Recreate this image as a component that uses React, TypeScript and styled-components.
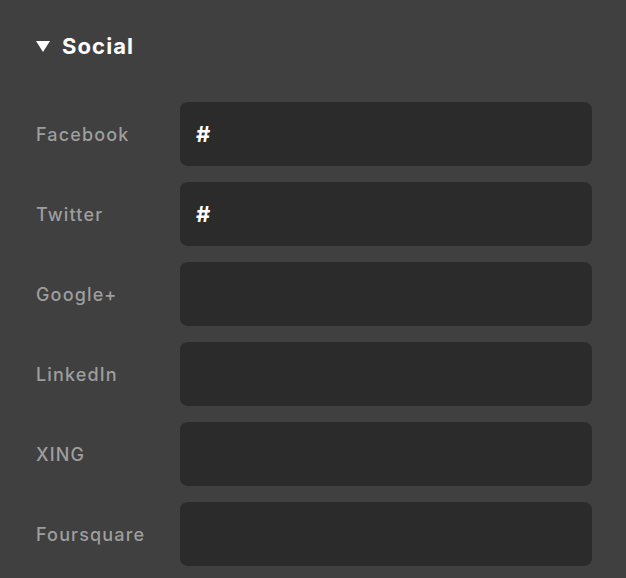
import React from "react";
import styled, { createGlobalStyle } from "styled-components";

const Global = createGlobalStyle`
  html, body { margin: 0; padding: 0; background: #404040; }
  body { font-family: Inter, "Noto Sans", sans-serif; -webkit-font-smoothing: antialiased; }
`;

const Panel = styled.div`
  width: 626px;
  height: 578px;
  box-sizing: border-box;
  background: #404040;
  padding: 30px 34px 0 36px;
  overflow: hidden;
`;

const Header = styled.div`
  display: flex;
  align-items: center;
  gap: 12px;
  height: 32px;
  margin-bottom: 40px;
`;

const Title = styled.span`
  color: #ffffff;
  font-size: 22px;
  font-weight: 700;
  letter-spacing: 1.1px;
`;

const Rows = styled.div`
  display: grid;
  grid-template-columns: 144px 1fr;
  row-gap: 16px;
  align-items: center;
`;

const Label = styled.label`
  color: #9e9e9e;
  font-size: 18px;
  font-weight: 500;
  letter-spacing: 1.15px;
`;

const Field = styled.div`
  height: 64px;
  border-radius: 8px;
  background: #2b2b2b;
  display: flex;
  align-items: center;
  padding-left: 16px;
  color: #ffffff;
  font-size: 22px;
  font-weight: 700;
`;

const fields: [string, string][] = [
  ["Facebook", "#"],
  ["Twitter", "#"],
  ["Google+", ""],
  ["LinkedIn", ""],
  ["XING", ""],
  ["Foursquare", ""],
];

export default function App() {
  return (
    <>
      <Global />
      <Panel>
        <Header>
          <svg width="14" height="11" viewBox="0 0 14 11">
            <path d="M0 0 H14 L7 11 Z" fill="#ffffff" />
          </svg>
          <Title>Social</Title>
        </Header>
        <Rows>
          {fields.map(([name, value]) => (
            <React.Fragment key={name}>
              <Label>{name}</Label>
              <Field>{value}</Field>
            </React.Fragment>
          ))}
        </Rows>
      </Panel>
    </>
  );
}
